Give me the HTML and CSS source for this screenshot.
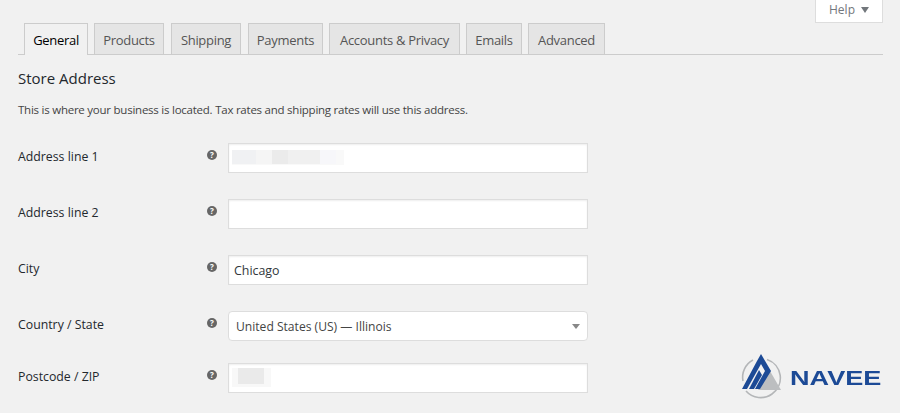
FILE: index.html
```html
<html>
    <head>
        <title>Settings - General</title>
        <link rel="stylesheet" href="styles.css">
    </head>
    <body>
        <div class="help-bar">
            <div class="help-tab">Help <span class="help-arrow"></span></div>
        </div>

        <nav class="tabs">
            <a class="tab tab-active">General</a>
            <a class="tab tab-products">Products</a>
            <a class="tab tab-shipping">Shipping</a>
            <a class="tab tab-payments">Payments</a>
            <a class="tab tab-accounts">Accounts &amp; Privacy</a>
            <a class="tab tab-emails">Emails</a>
            <a class="tab tab-advanced">Advanced</a>
        </nav>

        <main>
            <h2 class="section-title">Store Address</h2>
            <p class="section-desc">This is where your business is located. Tax rates and shipping rates will use this address.</p>

            <div class="row">
                <label class="row-label">Address line 1</label>
                <span class="tip">?</span>
                <div class="field">
                    <input class="input" type="text" value="">
                    <div class="smudge smudge-address">
                        <i class="s1"></i><i class="s2"></i><i class="s3"></i><i class="s4"></i><i class="s5"></i>
                    </div>
                </div>
            </div>

            <div class="row">
                <label class="row-label">Address line 2</label>
                <span class="tip">?</span>
                <div class="field"><input class="input" type="text" value=""></div>
            </div>

            <div class="row">
                <label class="row-label">City</label>
                <span class="tip">?</span>
                <div class="field"><input class="input" type="text" value="Chicago"></div>
            </div>

            <div class="row row-select">
                <label class="row-label">Country / State</label>
                <span class="tip">?</span>
                <div class="field">
                    <div class="select">
                        <span>United States (US) — Illinois</span>
                        <span class="select-arrow"></span>
                    </div>
                </div>
            </div>

            <div class="row">
                <label class="row-label">Postcode / ZIP</label>
                <span class="tip">?</span>
                <div class="field">
                    <input class="input" type="text" value="">
                    <div class="smudge smudge-zip"><i class="z1"></i></div>
                </div>
            </div>
        </main>

        <div class="logo">
            <svg class="logo-mark" width="50" height="50" viewBox="0 0 50 50">
                <path d="M29 9.5 A19.5 19.5 0 0 1 34 44 A19.5 19.5 0 0 1 8 41" fill="none" stroke="#b4b6b8" stroke-width="1.6"/>
                <path d="M15 10 A19.5 19.5 0 0 0 5 31" fill="none" stroke="#b4b6b8" stroke-width="1.6"/>
                <polygon points="32,21 43,40 20,40" fill="#bcbec0"/>
                <path d="M4 39 L19 11 L23 4 L33 21 L22 39 L17 39 L27 21 L23 14 L9 39 Z" fill="#1c4a96"/>
                <path d="M11 39 L21 20 L24 25 L16 39 Z" fill="#1c4a96"/>
            </svg>
            <span class="logo-text">NAVEE</span>
        </div>
    </body>
</html>
```

FILE: styles.css
```css
html, body {
    height: 413px;
    overflow: hidden; }
body {
    margin: 0;
    padding: 0 17px 0 18px;
    background: #f1f1f1;
    color: #444;
    font-family: "Open Sans", sans-serif;
    font-size: 12.5px;
    position: relative; }

.help-bar {
    display: flex;
    justify-content: flex-end;
    height: 23px; }
.help-tab {
    box-sizing: border-box;
    width: 68px;
    height: 23px;
    background: #fff;
    border: 1px solid #ddd;
    border-top: 0;
    color: #72777c;
    display: flex;
    align-items: center;
    justify-content: center;
    gap: 6px;
    font-size: 12px;
    padding-bottom: 3px; }
.help-arrow {
    width: 0;
    height: 0;
    margin-top: 1px;
    border: 4px solid transparent;
    border-bottom: 0;
    border-top: 6px solid #72777c; }

.tabs {
    display: flex;
    height: 31px;
    padding-left: 6px;
    border-bottom: 1px solid #ccc; }
.tab {
    box-sizing: border-box;
    height: 31px;
    padding-top: 7px;
    margin-right: 6px;
    text-align: center;
    background: #e5e5e5;
    border: 1px solid #ccc;
    border-bottom: 0;
    color: #555;
    font-size: 13px;
    font-weight: 500;
    letter-spacing: -.3px; }
.tab-active {
    width: 64px;
    height: 32px;
    background: #f1f1f1;
    color: #000; }
.tab-products { width: 70px; margin-right: 7px; }
.tab-shipping { width: 70px; margin-right: 7px; }
.tab-payments { width: 75px; }
.tab-accounts { width: 131px; }
.tab-emails { width: 56px; }
.tab-advanced { width: 77px; }

.section-title {
    margin: 14px 0 0;
    height: 18px;
    line-height: 18px;
    font-size: 15px;
    font-weight: 500;
    color: #23282d; }
.section-desc {
    margin: 14px 0 0;
    height: 18px;
    line-height: 18px;
    font-size: 11.5px;
    letter-spacing: -.24px;
    color: #444; }

.row {
    display: flex;
    align-items: center;
    height: 30px;
    margin-top: 26px; }
.section-desc + .row {
    margin-top: 24px; }
.row-select + .row {
    margin-top: 22px; }
.row-label {
    width: 189px;
    flex-shrink: 0;
    font-size: 12.3px;
    font-weight: 500;
    color: #23282d;
    padding-bottom: 4px; }
.tip {
    box-sizing: border-box;
    width: 10px;
    height: 10px;
    margin-right: 11px;
    margin-bottom: 6px;
    border-radius: 50%;
    background: #666;
    color: #fff;
    font-size: 8px;
    font-weight: 700;
    line-height: 10px;
    text-align: center; }

.field {
    position: relative;
    width: 360px;
    height: 30px; }
.input {
    box-sizing: border-box;
    width: 100%;
    height: 30px;
    margin: 0;
    padding: 0 5px;
    background: #fff;
    border: 1px solid #ddd;
    box-shadow: inset 0 1px 2px rgba(0, 0, 0, .07);
    color: #32373c;
    font-family: inherit;
    font-size: 12.4px; }
.select {
    box-sizing: border-box;
    height: 30px;
    padding: 0 7px;
    display: flex;
    align-items: center;
    justify-content: space-between;
    background: #fff;
    border: 1px solid #ddd;
    border-radius: 4px;
    color: #444;
    font-size: 12.1px; }
.select-arrow {
    width: 0;
    height: 0;
    border: 4px solid transparent;
    border-bottom: 0;
    border-top: 5px solid #888; }

/* blurred out values lying over the inputs */
.smudge {
    position: absolute;
    top: 7px;
    height: 15px;
    display: flex;
    filter: blur(.7px); }
.smudge i {
    display: block;
    height: 100%; }
.smudge-address {
    left: 4px;
    width: 112px;
    background: #f9f9f9; }
.smudge-address .s1 { width: 24px; height: 14px; background: #f0f1f3; }
.smudge-address .s2 { width: 16px; height: 14px; background: #f5f5f5; }
.smudge-address .s3 { width: 16px; height: 14px; background: #ebebeb; }
.smudge-address .s4 { width: 32px; height: 14px; background: #f0f0f0; }
.smudge-address .s5 { width: 16px; height: 14px; background: #f7f7fa; }
.smudge-zip {
    left: 4px;
    width: 39px;
    top: 5px;
    height: 19px;
    background: #f8f8f8; }
.smudge-zip .z1 { margin-left: 6px; width: 26px; height: 16px; background: #eaeaea; }

/* watermark over the page */
.logo {
    position: absolute;
    left: 738px;
    top: 350px;
    display: flex;
    gap: 2px;
    filter: blur(.4px); }
.logo-text {
    margin-top: 17px;
    height: 22px;
    line-height: 22px;
    color: #1c4a96;
    font-family: "Liberation Sans", sans-serif;
    font-size: 19.5px;
    font-weight: 700;
    transform: scaleX(1.39);
    transform-origin: left center; }
```
